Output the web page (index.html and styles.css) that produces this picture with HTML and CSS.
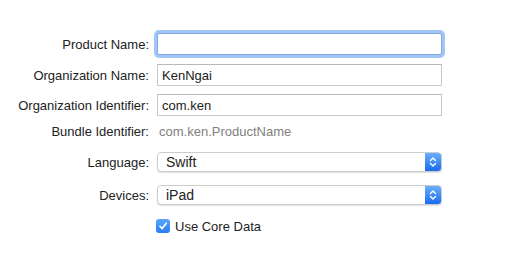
FILE: index.html
```html
<!DOCTYPE html>
<html lang="en">
<head>
    <meta charset="UTF-8">
    <meta name="viewport" content="width=device-width, initial-scale=1.0">
    <title>Project Options</title>
    <link rel="stylesheet" href="styles.css">
</head>
<body>
    <form class="options">
        <div class="row row-product">
            <label for="product">Product Name:</label>
            <input type="text" id="product" class="field focused">
        </div>
        <div class="row row-org">
            <label for="org">Organization Name:</label>
            <input type="text" id="org" class="field" value="KenNgai">
        </div>
        <div class="row row-ident">
            <label for="ident">Organization Identifier:</label>
            <input type="text" id="ident" class="field" value="com.ken">
        </div>
        <div class="row row-bundle">
            <label>Bundle Identifier:</label>
            <span class="static">com.ken.ProductName</span>
        </div>
        <div class="row row-lang">
            <label>Language:</label>
            <div class="popup">
                <span class="popup-value">Swift</span>
                <span class="popup-arrows">
                    <svg width="8" height="12" viewBox="0 0 8 12"><path d="M1.5 4.5 L4 2 L6.5 4.5 M1.5 7.5 L4 10 L6.5 7.5" fill="none" stroke="#fff" stroke-width="1.4" stroke-linecap="round" stroke-linejoin="round"/></svg>
                </span>
            </div>
        </div>
        <div class="row row-devices">
            <label>Devices:</label>
            <div class="popup">
                <span class="popup-value">iPad</span>
                <span class="popup-arrows">
                    <svg width="8" height="12" viewBox="0 0 8 12"><path d="M1.5 4.5 L4 2 L6.5 4.5 M1.5 7.5 L4 10 L6.5 7.5" fill="none" stroke="#fff" stroke-width="1.4" stroke-linecap="round" stroke-linejoin="round"/></svg>
                </span>
            </div>
        </div>
        <div class="row row-check">
            <span class="spacer"></span>
            <span class="checkbox">
                <svg width="10" height="10" viewBox="0 0 10 10"><path d="M2 5.2 L4.2 7.6 L8.2 2.2" fill="none" stroke="#fff" stroke-width="1.6" stroke-linecap="round" stroke-linejoin="round"/></svg>
            </span>
            <span class="check-label">Use Core Data</span>
        </div>
    </form>
</body>
</html>
```

FILE: styles.css
```css
body {
    margin: 0;
    background: #fff;
    font-family: "Liberation Sans", Arial, sans-serif;
    font-size: 13px;
    color: #222;
}

.options {
    padding-top: 33px;
}

.row {
    display: flex;
    align-items: center;
}

.row label,
.spacer {
    width: 149px;
    margin-right: 8px;
    text-align: right;
    flex-shrink: 0;
}

.row-product,
.row-org,
.row-ident {
    height: 22px;
}

.row-org {
    margin-top: 9px;
}

.row-ident {
    margin-top: 8px;
}

.row-bundle {
    height: 18px;
    margin-top: 6px;
}

.row-lang,
.row-devices {
    height: 20px;
}

.row-lang {
    margin-top: 12px;
}

.row-devices {
    margin-top: 13px;
}

.row-check {
    height: 14px;
    margin-top: 14px;
}

.field {
    box-sizing: border-box;
    width: 285px;
    height: 22px;
    margin: 0;
    padding: 0 4px;
    border: 1px solid #c9c9c9;
    border-top-color: #b9b9b9;
    border-radius: 0;
    font-family: inherit;
    font-size: 13px;
    color: #222;
    outline: none;
}

.focused {
    border-color: #7ea9e6;
    border-radius: 2px;
    box-shadow: 0 0 0 3px #a3c7f4;
}

.static {
    padding-left: 2px;
    color: #808080;
}

.popup {
    box-sizing: border-box;
    display: flex;
    width: 285px;
    height: 20px;
    border: 1px solid #cdcdcd;
    border-radius: 4px;
    box-shadow: 0 1px 1px rgba(0, 0, 0, 0.12);
    overflow: hidden;
    background: #fff;
}

.popup-value {
    flex: 1;
    padding-left: 8px;
    line-height: 18px;
    font-size: 14px;
}

.popup-arrows {
    display: flex;
    align-items: center;
    justify-content: center;
    width: 16px;
    background: linear-gradient(#69b0fa, #1a6cf0);
}

.checkbox {
    box-sizing: border-box;
    display: flex;
    align-items: center;
    justify-content: center;
    width: 14px;
    height: 14px;
    margin-left: -1px;
    border-radius: 3px;
    background: linear-gradient(#5aa6fa, #2a7cf2);
}

.check-label {
    margin-left: 5px;
}
```
